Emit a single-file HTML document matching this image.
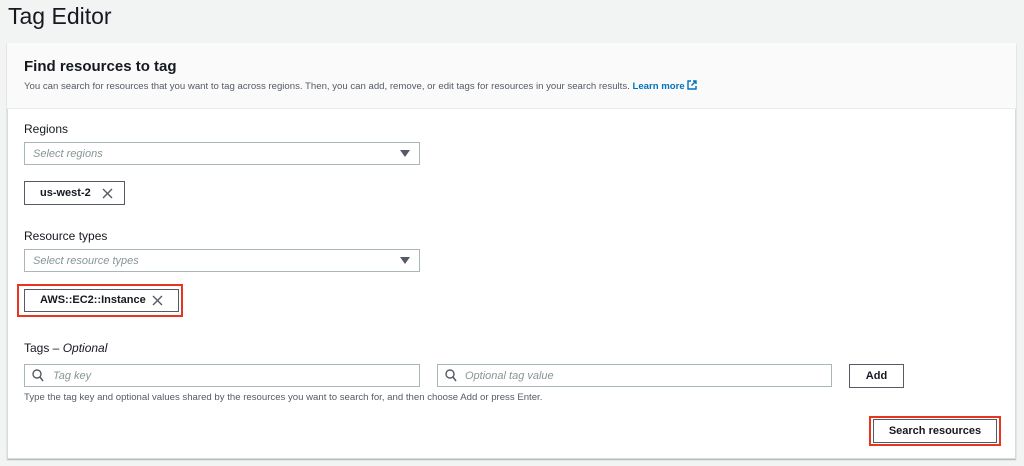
<!DOCTYPE html>
<html><head><style>
*{box-sizing:border-box;margin:0;padding:0}
body{width:1024px;height:466px;background:#f2f3f3;font-family:"Liberation Sans",sans-serif;color:#16191f;position:relative;overflow:hidden}
.a{position:absolute;white-space:nowrap}
.card{left:7px;top:43px;width:1009px;height:416px;background:#fff;border:1px solid #d5dbdb;box-shadow:0 1px 1px rgba(0,28,36,.3)}
.hdr{left:7px;top:43px;width:1009px;height:66px;background:#fafafa;border-bottom:1px solid #eaeded}
.lbl{font-size:12px;color:#16191f}
.inp{border:1px solid #aab7b8;background:#fff;height:23px;font-size:11px;font-style:italic;color:#879596;padding-left:8px;line-height:22px}
.chip{border:1px solid #545b64;background:#fff;font-weight:bold;font-size:11px;line-height:22px;color:#16191f}
.red{border:2px solid #e8361e}
.btn{border:1px solid #545b64;background:#fff;font-weight:bold;font-size:11px;text-align:center;color:#16191f}
.x{position:absolute;top:6px}
</style></head><body>
<div class="a" style="left:8px;top:3px;font-size:23px;">Tag Editor</div>
<div class="a card"></div>
<div class="a hdr"></div>
<div class="a" style="left:24px;top:58px;font-size:15px;font-weight:bold">Find resources to tag</div>
<div class="a" style="left:24px;top:80px;font-size:9.6px;color:#545b64">You can search for resources that you want to tag across regions. Then, you can add, remove, or edit tags for resources in your search results. <b style="color:#0073bb">Learn more</b> <svg width="10" height="10" viewBox="0 0 10 10" style="vertical-align:-1px"><path d="M4 1H1v8h8V6M6 1h3v3M9 1L4.5 5.5" fill="none" stroke="#0073bb" stroke-width="1.4"/></svg></div>

<div class="a lbl" style="left:24px;top:122px">Regions</div>
<div class="a inp" style="left:24px;top:142px;width:396px">Select regions</div>
<div class="a" style="left:400px;top:150px;width:0;height:0;border-left:5px solid transparent;border-right:5px solid transparent;border-top:7px solid #545b64"></div>
<div class="a chip" style="left:24px;top:181px;width:101px;height:24px;padding-left:15px">us-west-2<svg class="x" style="left:77px" width="11" height="11" viewBox="0 0 11 11"><path d="M1 1l9 9M10 1l-9 9" stroke="#545b64" stroke-width="1.4"/></svg></div>

<div class="a lbl" style="left:24px;top:229px">Resource types</div>
<div class="a inp" style="left:24px;top:249px;width:396px">Select resource types</div>
<div class="a" style="left:400px;top:257px;width:0;height:0;border-left:5px solid transparent;border-right:5px solid transparent;border-top:7px solid #545b64"></div>
<div class="a red" style="left:17px;top:284px;width:166px;height:33px"></div>
<div class="a chip" style="left:24px;top:289px;width:155px;height:23px;padding-left:15px;line-height:21px">AWS::EC2::Instance<svg class="x" style="left:127px;top:5px" width="11" height="11" viewBox="0 0 11 11"><path d="M1 1l9 9M10 1l-9 9" stroke="#545b64" stroke-width="1.4"/></svg></div>

<div class="a lbl" style="left:24px;top:341px">Tags – <i>Optional</i></div>
<div class="a inp" style="left:24px;top:364px;width:396px;padding-left:28px">Tag key</div>
<div class="a inp" style="left:437px;top:364px;width:395px;padding-left:27px">Optional tag value</div>
<svg class="a" style="left:32px;top:369px" width="12" height="13" viewBox="0 0 12 13"><circle cx="5" cy="5" r="4" fill="none" stroke="#545b64" stroke-width="1.4"/><path d="M8 8l3 4" stroke="#545b64" stroke-width="1.5"/></svg>
<svg class="a" style="left:445px;top:369px" width="12" height="13" viewBox="0 0 12 13"><circle cx="5" cy="5" r="4" fill="none" stroke="#545b64" stroke-width="1.4"/><path d="M8 8l3 4" stroke="#545b64" stroke-width="1.5"/></svg>
<div class="a btn" style="left:849px;top:364px;width:55px;height:24px;line-height:22px">Add</div>
<div class="a" style="left:24px;top:392px;font-size:9.6px;color:#545b64">Type the tag key and optional values shared by the resources you want to search for, and then choose Add or press Enter.</div>

<div class="a red" style="left:869px;top:416px;width:132px;height:30px"></div>
<div class="a btn" style="left:873px;top:419px;width:124px;height:24px;line-height:22px">Search resources</div>
</body></html>
